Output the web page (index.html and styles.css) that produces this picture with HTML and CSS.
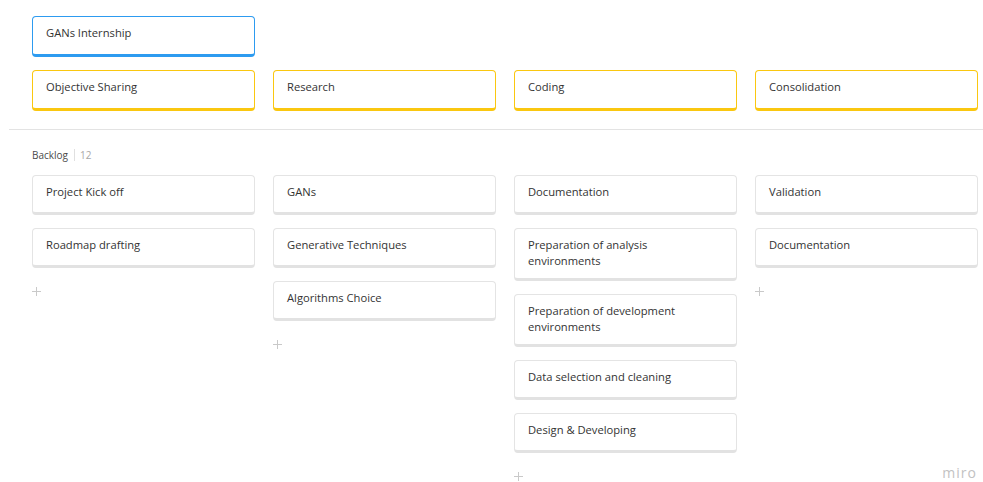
FILE: index.html
```html
<!DOCTYPE html>
<html lang="en">
<head>
<meta charset="utf-8">
<title>GANs Internship</title>
<link rel="stylesheet" href="styles.css">
</head>
<body>
<div class="board">
  <div class="top">
    <div class="card card-blue">GANs Internship</div>
  </div>
  <div class="lanes">
    <div class="card card-yellow">Objective Sharing</div>
    <div class="card card-yellow">Research</div>
    <div class="card card-yellow">Coding</div>
    <div class="card card-yellow">Consolidation</div>
  </div>
  <hr class="divider">
  <div class="group-label">Backlog<span class="sep"></span><span class="count">12</span></div>
  <div class="columns">
    <div class="col">
      <div class="card">Project Kick off</div>
      <div class="card">Roadmap drafting</div>
      <div class="add"><svg width="9" height="9" viewBox="0 0 9 9"><path d="M4.5 0v9M0 4.5h9" stroke="#c9c9c9" stroke-width="1"/></svg></div>
    </div>
    <div class="col">
      <div class="card">GANs</div>
      <div class="card">Generative Techniques</div>
      <div class="card">Algorithms Choice</div>
      <div class="add"><svg width="9" height="9" viewBox="0 0 9 9"><path d="M4.5 0v9M0 4.5h9" stroke="#c9c9c9" stroke-width="1"/></svg></div>
    </div>
    <div class="col">
      <div class="card">Documentation</div>
      <div class="card">Preparation of analysis environments</div>
      <div class="card">Preparation of development environments</div>
      <div class="card">Data selection and cleaning</div>
      <div class="card">Design &amp; Developing</div>
      <div class="add"><svg width="9" height="9" viewBox="0 0 9 9"><path d="M4.5 0v9M0 4.5h9" stroke="#c9c9c9" stroke-width="1"/></svg></div>
    </div>
    <div class="col">
      <div class="card">Validation</div>
      <div class="card">Documentation</div>
      <div class="add"><svg width="9" height="9" viewBox="0 0 9 9"><path d="M4.5 0v9M0 4.5h9" stroke="#c9c9c9" stroke-width="1"/></svg></div>
    </div>
  </div>
</div>
<div class="brand">miro</div>
</body>
</html>
```

FILE: styles.css
```css
html, body {
  margin: 0;
  padding: 0;
  background: #ffffff;
}

body {
  font-family: "Open Sans", "Noto Sans", sans-serif;
  font-size: 11.2px;
  color: #333333;
  width: 983px;
  height: 482px;
  overflow: hidden;
  position: relative;
}

.board {
  padding-top: 16px;
}

.top,
.lanes,
.columns {
  display: grid;
  grid-template-columns: repeat(4, 223px);
  column-gap: 18px;
  padding-left: 32px;
}

.lanes {
  margin-top: 13px;
}

.card {
  box-sizing: border-box;
  background: #fff;
  border: 1px solid #e4e4e4;
  border-bottom: 3px solid #e2e2e2;
  border-radius: 4px;
  padding: 8px 40px 9px 13px;
  min-height: 40px;
  line-height: 16px;
}

.card-blue {
  border-color: #2d9bf0;
  border-width: 1.5px 1.5px 3.5px;
  min-height: 41px;
}

.card-yellow {
  border-color: #fac710;
  border-width: 1.5px 1.5px 3.5px;
  min-height: 41px;
}

.divider {
  border: none;
  border-top: 1px solid #e3e3e3;
  margin: 18px 0 0 9px;
  height: 0;
}

.group-label {
  padding-left: 32px;
  margin-top: 18px;
  font-size: 10px;
  line-height: 14px;
  color: #4a4a4a;
  display: flex;
  align-items: center;
}

.group-label .sep {
  display: inline-block;
  width: 1px;
  height: 12px;
  background: #e0e0e0;
  margin: 0 5px 0 6px;
}

.group-label .count {
  color: #a8a8a8;
}

.columns {
  margin-top: 13px;
}

.col {
  display: flex;
  flex-direction: column;
  gap: 13px;
}

.add {
  display: flex;
  padding-left: 0;
  margin-top: 6px;
  height: 9px;
}

.brand {
  position: absolute;
  right: 6px;
  bottom: 1px;
  line-height: 16px;
  font-family: "Open Sans", sans-serif;
  font-size: 14px;
  letter-spacing: 1px;
  color: #c2c2c2;
}
```
